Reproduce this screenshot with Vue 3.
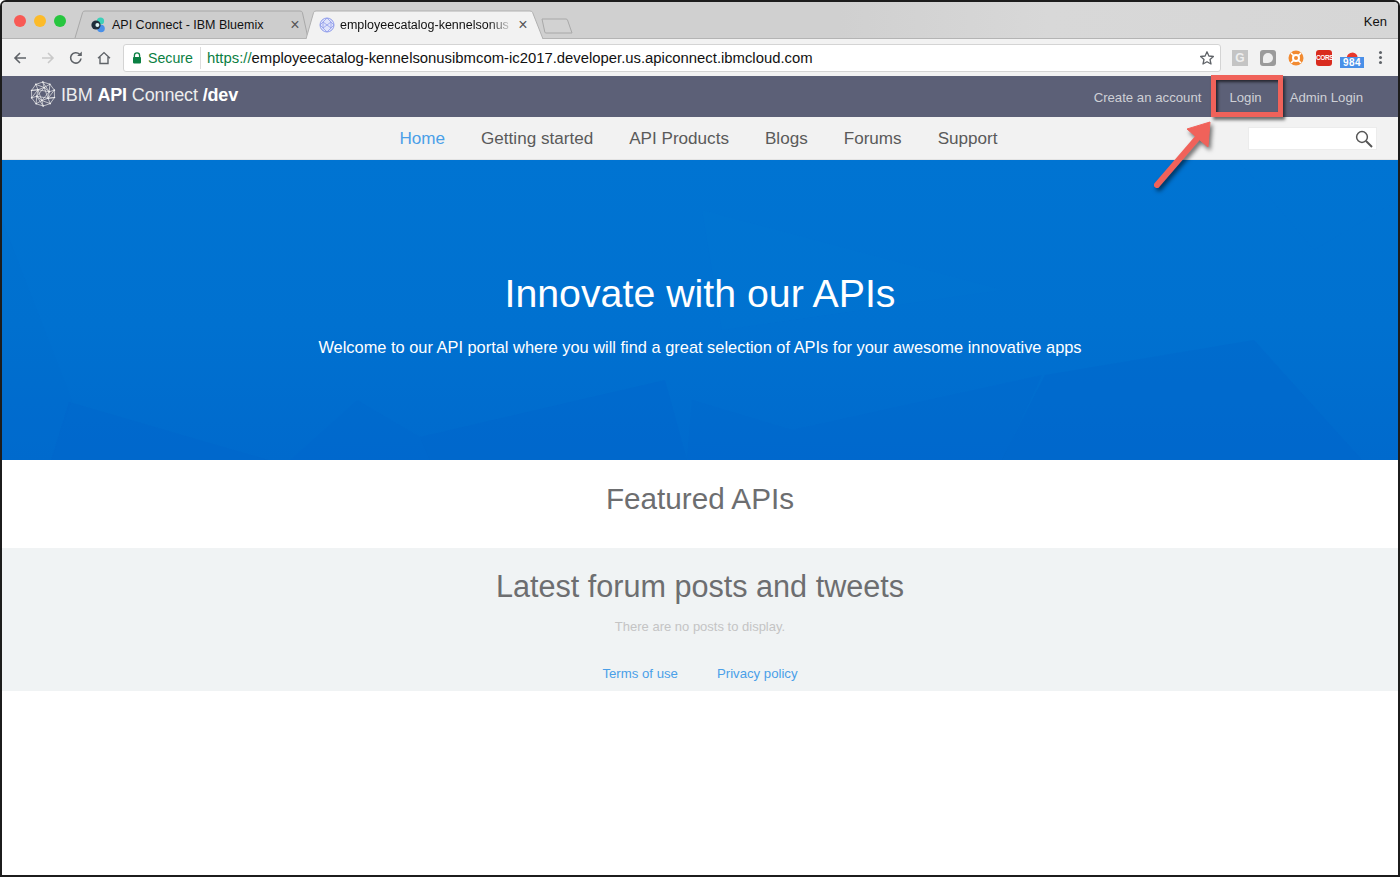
<script setup>
const navItems = ['Getting started', 'API Products', 'Blogs', 'Forums', 'Support']
const ring = (n, r, off) => Array.from({ length: n }, (_, i) => {
  const a = off + (i * 2 * Math.PI) / n
  return [13 + r * Math.cos(a), 13 + r * Math.sin(a)]
})
const outer = ring(10, 12, 0.3)
const inner = ring(6, 6.6, 0.7)
const nodes = [...outer, ...inner].map(([cx, cy]) => ({ cx, cy }))
const segs = []
const add = (p, q) => segs.push({ x1: p[0], y1: p[1], x2: q[0], y2: q[1] })
outer.forEach((p, i) => {
  add(p, outer[(i + 1) % 10])
  add(p, inner[Math.floor((i * 6) / 10)])
  add(p, inner[Math.ceil((i * 6) / 10) % 6])
})
inner.forEach((p, i) => {
  add(p, inner[(i + 1) % 6])
  add(p, inner[(i + 2) % 6])
})
</script>

<template>
  <div class="window">
    <header class="tabstrip">
      <div class="lights">
        <i class="light red"></i><i class="light yellow"></i><i class="light green"></i>
      </div>
      <div class="tab tab-off">
        <svg class="tab-shape" viewBox="0 0 233 27" width="233" height="27">
          <path d="M0 27L7.6 1.5Q8 0 10 0H225Q227 0 227.4 1.5L233 27" fill="#cdcdcd" stroke="#a8a8a8" />
        </svg>
        <svg class="fav" viewBox="0 0 16 16" width="16" height="16">
          <circle cx="10.5" cy="4" r="3.6" fill="#3dd0b8" />
          <circle cx="11" cy="11.5" r="3.8" fill="#4a90e8" />
          <circle cx="6" cy="8" r="4.6" fill="#1f2d3a" />
          <circle cx="7.4" cy="8" r="2" fill="#dff3f3" />
        </svg>
        <span class="tab-title">API Connect - IBM Bluemix</span>
        <span class="tab-x">×</span>
      </div>
      <div class="tab tab-on">
        <svg class="tab-shape" viewBox="0 0 237 28" width="237" height="28">
          <path d="M0 28L7.6 1.5Q8 0 10 0H224Q226 0 226.6 1.5L237 28" fill="#f2f2f2" stroke="#b0b0b0" />
        </svg>
        <svg class="fav" viewBox="0 0 16 16" width="16" height="16">
          <circle cx="8" cy="8" r="7" fill="#dfe3fb" stroke="#8f9cea" stroke-width="1" />
          <path d="M8 1l-4 4 4 3 4-3zM1 8l3-3v6zM15 8l-3-3v6zM8 8l-4 3 4 4 4-4z" stroke="#8f9cea" stroke-width=".8" fill="none" />
        </svg>
        <span class="tab-title fade">employeecatalog-kennelsonus</span>
        <span class="tab-x">×</span>
      </div>
      <svg class="newtab" viewBox="0 0 32 16" width="32" height="16">
        <path d="M1 1H25Q26 1 26.5 2L31 15H5Q4 15 3.8 14Z" fill="#d2d2d2" stroke="#a8a8a8" />
      </svg>
      <div class="user">Ken</div>
    </header>

    <div class="toolbar">
      <svg class="tool" viewBox="0 0 16 16" width="16" height="16"><path d="M14 8H3M8 3L3 8l5 5" fill="none" stroke="#5f6368" stroke-width="1.6" /></svg>
      <svg class="tool" viewBox="0 0 16 16" width="16" height="16"><path d="M2 8h11M8 3l5 5-5 5" fill="none" stroke="#c9c9c9" stroke-width="1.6" /></svg>
      <svg class="tool" viewBox="0 0 16 16" width="16" height="16"><path d="M13 8.5A5.2 5.2 0 1 1 11.6 4.3" fill="none" stroke="#5f6368" stroke-width="1.6" /><path d="M9.2 6h4.6V1.4z" fill="#5f6368" /></svg>
      <svg class="tool" viewBox="0 0 16 16" width="16" height="16"><path d="M2 8.2L8 2.6l6 5.6M4 7v6.5h8V7" fill="none" stroke="#5f6368" stroke-width="1.4" /></svg>
      <div class="omnibox">
        <svg viewBox="0 0 10 12" width="10" height="12"><path d="M2.4 5V3.4a2.6 2.6 0 0 1 5.2 0V5" fill="none" stroke="#0b8043" stroke-width="1.3" /><rect x="1" y="5" width="8" height="6.4" rx=".8" fill="#0b8043" /></svg>
        <span class="secure">Secure</span>
        <span class="url"><span class="scheme">https://</span>employeecatalog-kennelsonusibmcom-ic2017.developer.us.apiconnect.ibmcloud.com</span>
        <svg class="star" viewBox="0 0 16 16" width="16" height="16"><path d="M8 1.8l1.9 4.2 4.5.5-3.4 3 1 4.5L8 11.7 4 14l1-4.5-3.4-3 4.5-.5z" fill="none" stroke="#5f6368" stroke-width="1.3" stroke-linejoin="round" /></svg>
      </div>
      <div class="exts">
        <div class="ext ext-g">G</div>
        <div class="ext ext-shield"><i></i></div>
        <svg class="ext-svg" viewBox="0 0 16 16" width="16" height="16"><circle cx="8" cy="8" r="7.5" fill="#f28a30" /><circle cx="8" cy="8" r="3" fill="none" stroke="#fff" stroke-width="2" /><path d="M3 3l3 3M13 3l-3 3M3 13l3-3M13 13l-3-3" stroke="#fff" stroke-width="1.6" /></svg>
        <div class="ext ext-cors">CORS</div>
        <div class="ext-badge">
          <svg viewBox="0 0 16 10" width="16" height="10"><path d="M3 10a5.5 5.5 0 0 1 10-4l1 4z" fill="#e8382c" /></svg>
          <span>984</span>
        </div>
        <div class="kebab"><i></i><i></i><i></i></div>
      </div>
    </div>

    <div class="site-head">
      <div class="brand">
        <svg class="logo" viewBox="0 0 26 26" width="26" height="26">
          <g stroke="#eceded" stroke-width=".7" fill="none">
            <line v-for="(s, i) in segs" :key="i" :x1="s.x1" :y1="s.y1" :x2="s.x2" :y2="s.y2" />
          </g>
          <circle v-for="(n, i) in nodes" :key="i" :cx="n.cx" :cy="n.cy" r=".8" fill="#f4f4f6" />
        </svg>
        <span class="brand-text">IBM <b>API</b> Connect <b>/dev</b></span>
      </div>
      <nav class="account">
        <a>Create an account</a>
        <a>Login</a>
        <a>Admin Login</a>
      </nav>
    </div>

    <div class="site-nav">
      <nav class="nav-links">
        <a class="active">Home</a>
        <a v-for="n in navItems" :key="n">{{ n }}</a>
      </nav>
      <div class="search">
        <svg viewBox="0 0 18 18" width="18" height="18"><circle cx="7" cy="7" r="5.4" fill="none" stroke="#555" stroke-width="1.5" /><path d="M11 11l6 6" stroke="#555" stroke-width="2" /></svg>
      </div>
    </div>

    <section class="hero">
      <svg class="facets" viewBox="0 0 1396 300" preserveAspectRatio="none">
        <polygon points="0,60 70,240 50,300 0,300" fill="#0068cc" opacity=".12" />
        <polygon points="67,242 266,300 49,300" fill="#0062ca" opacity=".3" />
        <polygon points="355,240 418,277 428,300 288,300" fill="#0066cc" opacity=".2" />
        <polygon points="663,220 685,300 428,300 418,277" fill="#0063ca" opacity=".35" />
        <polygon points="685,300 690,240 790,270 1040,215 1000,300" fill="#0066cc" opacity=".22" />
        <polygon points="1043,215 1252,180 1360,300 1000,300" fill="#0063ca" opacity=".3" />
        <polygon points="700,50 1000,130 720,170" fill="#0078d8" opacity=".12" />
        <polygon points="1236,0 1312,90 1396,40 1396,0" fill="#0078d8" opacity=".1" />
      </svg>
      <h1>Innovate with our APIs</h1>
      <p>Welcome to our API portal where you will find a great selection of APIs for your awesome innovative apps</p>
    </section>

    <section class="featured"><h2>Featured APIs</h2></section>

    <section class="forum">
      <h2>Latest forum posts and tweets</h2>
      <p class="none">There are no posts to display.</p>
      <div class="foot-links"><a>Terms of use</a><a>Privacy policy</a></div>
    </section>

    <div class="callout">
      <div class="callout-box"></div>
      <svg class="callout-arrow" viewBox="0 0 70 80" width="70" height="80">
        <g fill="#f0625a" stroke="#f0625a">
          <path d="M9 77L49.5 30" stroke-width="6" stroke-linecap="round" />
          <polygon points="62,14 39,21 60,39" stroke-width="1" />
        </g>
      </svg>
    </div>
  </div>
</template>

<style>
html, body { margin: 0; background: #fff; }
</style>

<style scoped>
.window {
  position: relative;
  width: 1400px;
  height: 877px;
  box-sizing: border-box;
  border: 2px solid #1c1c1c;
  border-radius: 6px 6px 0 0;
  background: #fff;
  overflow: hidden;
  font-family: "Liberation Sans", Arial, sans-serif;
}
.tabstrip {
  height: 37px;
  box-sizing: border-box;
  display: flex;
  align-items: flex-end;
  background: linear-gradient(90deg, #d0d0d0 0%, #d0d0d0 60%, #d8d8d8 75%, #d6d6d6 100%);
  border-bottom: 1px solid #b4b4b4;
  color: #111;
}
.lights { display: flex; gap: 8px; padding: 0 0 11px 12px; width: 73px; box-sizing: border-box; flex: none; }
.light { width: 12px; height: 12px; border-radius: 50%; }
.red { background: #f85a55; }
.yellow { background: #fcbb2a; }
.green { background: #27c63f; }
.tab {
  position: relative;
  flex: none;
  display: flex;
  align-items: center;
  font-size: 12.5px;
  box-sizing: border-box;
  white-space: nowrap;
}
.tab-shape { position: absolute; left: 0; top: 0; overflow: visible; }
.fav, .tab-title, .tab-x { position: relative; flex: none; }
.tab-off { width: 233px; height: 27px; padding: 0 6px 0 15px; gap: 6px; }
.tab-on { width: 237px; height: 28px; margin: 0 0 -1px -2px; padding: 0 13px 0 13px; gap: 5px; }
.fade { -webkit-mask-image: linear-gradient(90deg, #000 88%, rgba(0,0,0,.2)); mask-image: linear-gradient(90deg, #000 88%, rgba(0,0,0,.2)); }
.tab-x { margin-left: auto; font-size: 16px; color: #555; line-height: 1; width: 14px; text-align: center; }
.newtab { flex: none; margin: 0 0 4px -2px; }
.user { margin-left: auto; padding: 0 11px 9px 0; font-size: 13px; }

.toolbar {
  height: 37px;
  display: flex;
  align-items: center;
  background: #f2f2f2;
  padding-left: 10px;
  box-sizing: border-box;
}
.tool { margin-right: 12px; flex: none; }
.omnibox {
  width: 1098px;
  height: 28px;
  margin-left: -1px;
  box-sizing: border-box;
  display: flex;
  align-items: center;
  background: #fff;
  border: 1px solid #d4d4d4;
  border-radius: 3px;
  padding: 0 5px 0 8px;
}
.secure { color: #0b8043; margin-left: 6px; padding-right: 7px; border-right: 1px solid #ddd; line-height: 22px; font-size: 14.2px; }
.url { margin-left: 6px; color: #111; white-space: nowrap; flex: 1; font-size: 14.85px; }
.scheme { color: #0b8043; }
.star { flex: none; }
.exts { display: flex; align-items: center; padding-left: 11px; gap: 12px; }
.ext { width: 16px; height: 16px; box-sizing: border-box; }
.ext-g { background: #c4c4c4; color: #eee; font-size: 12px; font-weight: 700; text-align: center; line-height: 16px; }
.ext-shield { background: #9a9a9a; border-radius: 3px; padding: 3px; }
.ext-shield i { display: block; width: 10px; height: 10px; background: #eee; border-radius: 50% 50% 50% 10%; }
.ext-svg { flex: none; }
.ext-cors { background: #d92b1e; color: #fff; font-size: 6.5px; font-weight: 700; border-radius: 3px; text-align: center; line-height: 16px; letter-spacing: -.4px; }
.ext-badge { position: relative; width: 24px; height: 19px; margin: 2px 0 0 -4px; text-align: center; }
.ext-badge svg { display: block; margin: 0 auto; }
.ext-badge span {
  position: absolute; left: 0; bottom: 0; width: 24px; height: 11px;
  background: #4a90e8; color: #fff; font-size: 10px; font-weight: 700; line-height: 11px; letter-spacing: .5px;
}
.kebab { display: flex; flex-direction: column; gap: 2px; margin-left: 3px; }
.kebab i { width: 3px; height: 3px; border-radius: 50%; background: #5f6368; }

.site-head {
  height: 41px;
  background: #5c6077;
  display: flex;
  align-items: center;
  justify-content: space-between;
  box-sizing: border-box;
  padding: 0 35px 0 28px;
}
.brand { display: flex; align-items: center; gap: 5px; margin-top: -4px; }
.logo { flex: none; margin-top: -1px; }
.brand-text { font-size: 18px; color: #eceded; letter-spacing: -.15px; white-space: nowrap; margin-top: 1px; }
.brand-text b { color: #fff; }
.account { display: flex; gap: 28px; font-size: 13.2px; color: #cfd0d6; margin-top: 1px; }

.site-nav {
  height: 43px;
  display: flex;
  align-items: center;
  justify-content: center;
  position: relative;
  background: #f2f2f2;
  border-bottom: 1px solid #e3e3e3;
  box-sizing: border-box;
  padding-top: 2px;
}
.nav-links { display: flex; gap: 36px; font-size: 17.1px; color: #5a5a5a; margin-left: -3px; }
.active { color: #4a9fe8; }
.search {
  position: absolute;
  right: 21px; top: 10px;
  width: 129px; height: 23px;
  box-sizing: border-box;
  background: #fff;
  border: 1px solid #ececec;
  display: flex;
  align-items: center;
  justify-content: flex-end;
  padding-right: 3px;
}

.hero {
  position: relative;
  height: 300px;
  box-sizing: border-box;
  background: linear-gradient(180deg, #0074d2 0%, #0071d0 55%, #006acd 100%);
  text-align: center;
  color: #fff;
  padding-top: 107px;
  overflow: hidden;
}
.facets { position: absolute; inset: 0; width: 100%; height: 100%; }
.hero h1 { position: relative; margin: 0; font-size: 39.3px; line-height: 52px; font-weight: 400; }
.hero p { position: relative; margin: 16px 0 0; font-size: 16.4px; line-height: 24px; }

.featured { height: 88px; text-align: center; }
h2 { margin: 0; font-weight: 400; color: #6d6e70; font-size: 29.7px; line-height: 36px; }
.featured h2 { padding-top: 21px; }
.forum { height: 143px; background: #f0f3f4; text-align: center; padding-top: 20px; box-sizing: border-box; }
.forum h2 { font-size: 30.6px; }
.none { margin: 14px 0 0; font-size: 13px; line-height: 18px; color: #c4c4c4; }
.foot-links { display: flex; justify-content: center; gap: 39px; margin-top: 29px; font-size: 13.2px; line-height: 18px; color: #4a9fe8; }

.callout { position: absolute; left: 0; top: 0; width: 0; height: 0; }
.callout-box {
  position: absolute;
  left: 1209px; top: 73px;
  width: 72px; height: 42px;
  box-sizing: border-box;
  border: 5px solid #f0625a;
  box-shadow: 2px 3px 3px rgba(0,0,0,.55), inset 2px 2px 3px rgba(0,0,0,.6);
}
.callout-arrow {
  position: absolute;
  left: 1146px; top: 106px;
  filter: drop-shadow(2px 3px 2px rgba(0,0,0,.55));
}
</style>
